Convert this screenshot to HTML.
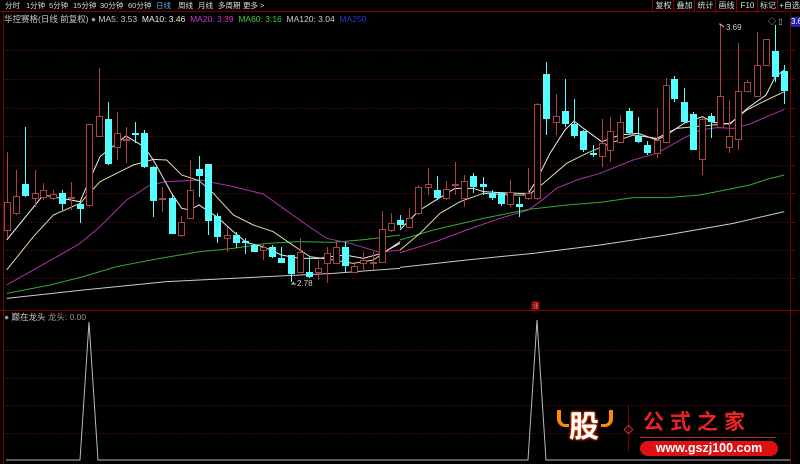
<!DOCTYPE html>
<html><head><meta charset="utf-8"><style>
html,body{margin:0;padding:0;background:#000;width:800px;height:464px;overflow:hidden;font-family:"Liberation Sans","Noto Sans CJK SC",sans-serif}
.t{position:absolute;font-size:9px;white-space:nowrap}
.m{position:absolute;top:0;color:#ddd;font-size:7.5px;white-space:nowrap;line-height:11px}
.b{position:absolute;top:0;height:11px;font-size:8px;color:#ddd;text-align:center;line-height:11px;border-left:1px solid #800;white-space:nowrap;overflow:hidden}
</style></head><body>
<div style="position:absolute;left:0;top:0;width:800px;height:464px">
<div class="m" style="left:5px">分时</div>
<div class="m" style="left:26px">1分钟</div>
<div class="m" style="left:49px">5分钟</div>
<div class="m" style="left:73px">15分钟</div>
<div class="m" style="left:100px">30分钟</div>
<div class="m" style="left:128px">60分钟</div>
<div class="m" style="left:156px;color:#5ad">日线</div>
<div class="m" style="left:178px">周线</div>
<div class="m" style="left:198px">月线</div>
<div class="m" style="left:218px">多周期</div>
<div class="m" style="left:243px">更多 &gt;</div>
<div class="b" style="left:652px;width:21px">复权</div>
<div class="b" style="left:673px;width:21px">叠加</div>
<div class="b" style="left:694px;width:21px">统计</div>
<div class="b" style="left:715px;width:21px">画线</div>
<div class="b" style="left:736px;width:21px">F10</div>
<div class="b" style="left:757px;width:20px">标记</div>
<div class="b" style="left:777px;width:23px">+自选</div>
<div style="position:absolute;left:0;top:11px;width:800px;height:1px;background:#700"></div>
<div class="t" style="left:4px;top:13px;color:#ccc;font-size:8.5px">华控赛格(日线 前复权) <span style="color:#999">●</span> MA5: 3.53&nbsp; <span style="color:#eed">MA10: 3.46</span>&nbsp; <span style="color:#c3c">MA20: 3.39</span>&nbsp; <span style="color:#4c4">MA60: 3.16</span>&nbsp; <span style="color:#ccc">MA120: 3.04</span>&nbsp; <span style="color:#33c">MA250</span></div>
<div class="t" style="left:791px;top:17px;width:10px;height:10px;background:#22a;color:#fff;font-size:8px;overflow:hidden">3.6</div>
<div class="t" style="left:768px;top:16px;color:#bbb;font-size:8px">◇ ▯</div>
<div class="t" style="left:4px;top:311px;color:#ccc;font-size:8.5px"><span style="color:#999">●</span> 巅在龙头 <span style="color:#998">龙头: 0.00</span></div>
<div class="t" style="left:531px;top:301px;background:#600;color:#f88;font-size:7px;padding:0 1px">涨</div>
<div class="t" style="left:726px;top:23px;color:#ccc;font-size:8px">3.69</div>
<div class="t" style="left:297px;top:279px;color:#ccc;font-size:8px">2.78</div>
<svg width="800" height="464" style="position:absolute;left:0;top:0">
<g stroke="#6a0c0c" stroke-width="1" stroke-dasharray="1,2">
<line x1="4" x2="790" y1="50.5" y2="50.5"/><line x1="4" x2="790" y1="79.5" y2="79.5"/><line x1="4" x2="790" y1="108.5" y2="108.5"/><line x1="4" x2="790" y1="136.5" y2="136.5"/><line x1="4" x2="790" y1="165.5" y2="165.5"/><line x1="4" x2="790" y1="193.5" y2="193.5"/><line x1="4" x2="790" y1="222.5" y2="222.5"/><line x1="4" x2="790" y1="250.5" y2="250.5"/><line x1="4" x2="790" y1="278.5" y2="278.5"/>
<line x1="4" x2="790" y1="350.5" y2="350.5"/><line x1="4" x2="790" y1="378.5" y2="378.5"/><line x1="4" x2="790" y1="405.5" y2="405.5"/><line x1="4" x2="790" y1="433.5" y2="433.5"/>
</g>
<line x1="3.5" y1="12" x2="3.5" y2="464" stroke="#700"/>
<line x1="790.5" y1="12" x2="790.5" y2="464" stroke="#700"/>
<line x1="0" y1="310.5" x2="800" y2="310.5" stroke="#800"/>
<g stroke="#700"><line x1="790" x2="795" y1="50.5" y2="50.5"/><line x1="790" x2="795" y1="79.5" y2="79.5"/><line x1="790" x2="795" y1="108.5" y2="108.5"/><line x1="790" x2="795" y1="136.5" y2="136.5"/><line x1="790" x2="795" y1="165.5" y2="165.5"/><line x1="790" x2="795" y1="193.5" y2="193.5"/><line x1="790" x2="795" y1="222.5" y2="222.5"/><line x1="790" x2="795" y1="250.5" y2="250.5"/><line x1="790" x2="795" y1="278.5" y2="278.5"/></g>
<g fill="none" stroke-width="1">
<g transform="translate(0,50) scale(0.33333)">
<polyline vector-effect="non-scaling-stroke" stroke="#ccc" points="20,745 250,720 500,695 800,680 1000,670 1200,655"/>
<polyline vector-effect="non-scaling-stroke" stroke="#3a3" points="20,730 150,705 250,680 350,650 480,625 600,605 700,595 800,580 900,575 1000,577 1100,568 1200,555"/>
<polyline vector-effect="non-scaling-stroke" stroke="#a3a" points="20,705 100,660 180,615 240,580 300,530 380,450 450,405 500,395 600,390 700,410 790,432 850,475 920,525 980,565 1050,580 1140,607 1200,600"/>
<polyline vector-effect="non-scaling-stroke" stroke="#dda" points="20,660 100,560 160,495 240,460 300,395 400,345 460,328 500,330 545,375 597,392 640,430 700,495 760,525 820,545 870,580 930,620 1000,630 1060,640 1120,630 1200,575"/>
<polyline vector-effect="non-scaling-stroke" stroke="#eee" points="20,570 130,435 240,455 300,320 378,258 432,290 460,330 515,430 545,475 570,480 597,465 650,500 700,545 740,578 790,590 844,615 900,625 955,625 1035,615 1090,625 1145,610 1200,580"/>
</g>
<g transform="translate(400,20) scale(0.33333)">
<polyline vector-effect="non-scaling-stroke" stroke="#ccc" points="0,742 200,720 400,700 600,675 800,645 1000,610 1153,575"/>
<polyline vector-effect="non-scaling-stroke" stroke="#3a3" points="0,660 100,630 250,595 385,568 500,555 600,547 700,533 800,533 900,525 1000,505 1050,495 1100,478 1153,465"/>
<polyline vector-effect="non-scaling-stroke" stroke="#a3a" points="0,698 60,680 120,660 200,630 300,595 385,570 420,545 470,505 530,480 600,460 700,420 770,400 850,355 900,330 950,323 1000,325 1050,312 1100,290 1153,268"/>
<polyline vector-effect="non-scaling-stroke" stroke="#dda" points="0,690 60,640 120,580 180,545 250,520 330,525 385,525 430,490 500,430 560,400 630,370 700,345 770,355 830,325 907,318 990,310 1040,270 1100,240 1153,215"/>
<polyline vector-effect="non-scaling-stroke" stroke="#eee" points="0,630 28,600 60,570 100,545 165,505 220,505 250,515 300,518 360,520 385,520 410,480 450,400 495,330 522,303 550,325 605,365 660,345 715,340 770,360 800,345 852,310 907,290 940,307 990,312 1042,265 1098,225 1126,170 1153,150"/>
</g>
</g>
<g id="c"></g>
<polyline fill="none" stroke="#bbb" points="6,460 80,460 89,322 98,460 528,460 537,320 546,460 790,460"/>
<polyline fill="none" stroke="#ccc" points="296,284 292,284 294,282" />
<polyline fill="none" stroke="#ccc" points="720,25 720,24 724,27"/>
</svg>
<div class="t" style="left:562px;top:408px;width:44px;height:40px;color:#fff;font-size:30px;font-weight:bold;text-align:center;line-height:40px;text-shadow:0 0 3px #f40,0 0 2px #f40">股</div>
<div style="position:absolute;left:557px;top:410px;width:8px;height:14px;border-left:4px solid #f80;border-bottom:3px solid #f80;border-radius:0 0 0 8px"></div>
<div style="position:absolute;left:601px;top:410px;width:8px;height:14px;border-right:4px solid #f80;border-bottom:3px solid #f80;border-radius:0 0 8px 0"></div>
<div style="position:absolute;left:628px;top:405px;width:1px;height:46px;background:#700"></div>
<div style="position:absolute;left:625px;top:426px;width:5px;height:5px;border:1px solid #c33;transform:rotate(45deg)"></div>
<div class="t" style="left:643px;top:406px;color:#e22;font-size:21px;font-weight:bold;letter-spacing:6px">公式之家</div>
<div style="position:absolute;left:640px;top:437px;width:136px;height:1px;background:#a33"></div>
<div class="t" style="left:640px;top:441px;width:138px;height:15px;background:#d11;border-radius:8px;color:#fff;font-size:12.5px;font-weight:bold;text-align:center;line-height:15px">www.gszj100.com</div>
</div>
<script>
var C=[
[7,202,230,152,238,1],[16,196,213,170,215,1],[25,184,196,127,197,0],[35,193,198,170,207,1],[43,190,197,183,200,1],[53,194,198,190,200,1],[62,193,204,190,210,0],[71,197,198,182,210,1],[80,204,209,202,223,0],[89,124,205,124,207,1],[99,116,136,68,137,1],[108,119,164,102,165,0],[117,133,147,112,160,1],[126,139,140,127,163,1],[135,133,135,122,143,0],[144,133,167,130,168,0],[153,167,201,166,217,0],[162,198,198,187,212,1],[172,198,234,195,234,0],[181,222,235,216,237,1],[190,190,218,160,218,1],[199,169,176,156,197,0],[208,164,221,164,235,0],[217,216,237,213,243,0],[227,235,238,227,252,1],[236,235,243,232,248,0],[245,241,243,238,254,0],[254,245,252,244,252,0],[263,247,250,243,260,1],[272,247,257,245,258,0],[281,258,263,247,263,0],[291,255,274,255,282,0],[300,252,272,238,273,1],[309,272,277,257,278,0],[318,268,272,260,280,1],[327,253,263,247,283,1],[336,247,263,240,264,1],[345,247,266,242,272,0],[354,266,272,264,272,1],[363,260,263,252,270,1],[373,262,262,252,270,1],[382,229,262,211,263,1],[391,223,230,213,232,1],[400,220,225,215,228,0],[409,218,227,208,228,1],[418,187,213,185,215,1],[428,184,187,168,195,1],[437,190,198,176,200,0],[446,189,198,181,200,1],[455,184,184,162,195,1],[464,181,198,175,207,1],[473,176,187,173,193,0],[483,184,187,177,195,0],[492,193,198,190,200,0],[501,193,204,192,206,0],[510,192,204,180,207,1],[519,204,207,197,217,0],[528,193,198,168,200,1],[537,104,198,103,200,1],[546,74,119,62,135,0],[556,116,122,94,135,1],[565,111,124,79,127,0],[574,124,136,99,138,0],[583,131,150,130,152,0],[593,153,155,145,157,0],[602,143,156,119,167,1],[610,131,150,117,162,1],[620,122,142,115,142,1],[629,111,133,108,135,0],[638,136,142,117,143,0],[647,145,153,141,155,0],[657,140,153,108,158,1],[666,85,142,78,142,1],[674,79,99,76,102,0],[684,102,122,88,123,0],[693,114,150,112,150,0],[702,119,159,117,175,1],[711,116,122,113,138,0],[720,96,127,25,127,1],[729,136,147,100,153,1],[738,91,139,43,150,1],[747,82,91,80,92,1],[757,65,96,32,96,1],[766,39,65,39,65,1],[775,51,77,25,82,0],[784,71,91,65,104,0]];
var s='';
C.forEach(function(c){var x=c[0],o=c[1],cl=c[2],h=c[3],l=c[4],up=c[5];
var col=up?'#a44':'#5ff';var bh=Math.max(1,cl-o);
s+='<line x1="'+(x+0.5)+'" x2="'+(x+0.5)+'" y1="'+h+'" y2="'+l+'" stroke="'+col+'"/>';
if(up){s+='<rect x="'+(x-2.5)+'" y="'+(o+0.5)+'" width="6" height="'+bh+'" fill="#000" stroke="'+col+'"/>';}
else{s+='<rect x="'+(x-3)+'" y="'+o+'" width="7" height="'+bh+'" fill="'+col+'"/>';}
});
document.getElementById('c').innerHTML=s;
</script>
</body></html>
